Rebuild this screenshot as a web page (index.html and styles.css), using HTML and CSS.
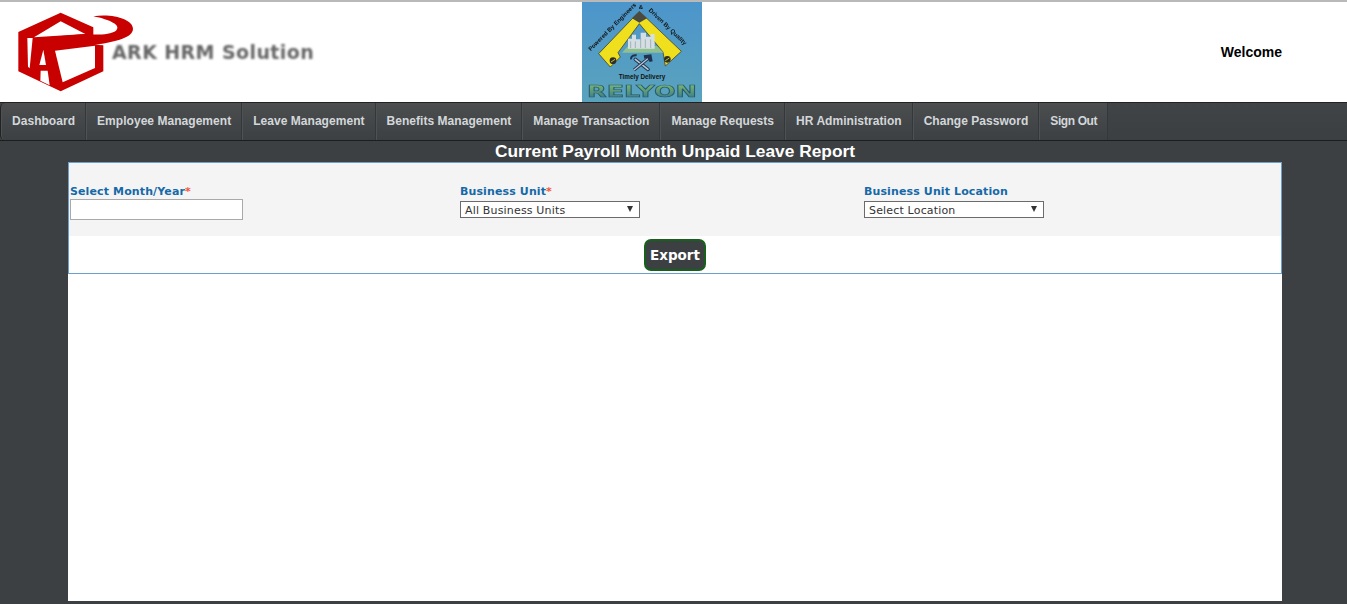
FILE: index.html
```html
<!DOCTYPE html>
<html lang="en">
<head>
<meta charset="utf-8">
<title>Current Payroll Month Unpaid Leave Report</title>
<link rel="stylesheet" href="styles.css">
</head>
<body>
<header class="top">
  <div class="brand">
    <svg class="brand-mark" width="130" height="90" viewBox="0 0 390 270" aria-hidden="true">
      <path fill="#c80000" d="M25 72 L152 14 L250 58 L250 110 L280 112 L280 190 L152 250 L25 190 Z"/>
      <path fill="#fff" d="M152 40 L226 78 L72 88 Z"/>
      <path fill="#fff" d="M52 90 L68 90 L59 181 L54 176 Z"/>
      <path fill="#fff" d="M100 125 L108 171 L88 171 Z"/>
      <path fill="#fff" d="M92 188 L113 188 L119 232 L91 218 Z"/>
      <path fill="#fff" d="M135 128 L255 113 L255 180 L158 223 Z"/>
      <path fill="#c80000" d="M250 25 C310 16 369 35 369 62 C369 88 320 100 260 110 L130 126 L96 124 L110 88 L225 78 C250 80 300 82 318 68 C335 52 300 35 250 25 Z"/>
    </svg>
    <span class="brand-name">ARK HRM Solution</span>
  </div>
  <svg class="relyon" width="120" height="100" viewBox="0 0 360 300" role="img" aria-label="Relyon">
    <defs>
      <linearGradient id="relyonBg" x1="0" y1="0" x2="0" y2="1">
        <stop offset="0" stop-color="#4c95cb"/>
        <stop offset="1" stop-color="#5aa3bd"/>
      </linearGradient>
      <linearGradient id="relyonName" x1="0" y1="0" x2="0" y2="1">
        <stop offset="0" stop-color="#7fbf6a"/>
        <stop offset="1" stop-color="#2f6f8f"/>
      </linearGradient>
    </defs>
    <rect width="360" height="300" fill="url(#relyonBg)"/>
    <path fill="#f0df1c" stroke="#2b2b20" stroke-width="2" d="M172 28 L298 148 L250 192 L243 150 L172 65 L108 152 L115 165 L85 195 L50 155 Z"/>
    <path fill="#4a4a42" d="M150 49 L172 28 L195 49 L172 62 Z"/>
    <path fill="#8fc08f" d="M138 132 L225 132 L245 152 L120 152 Z"/>
    <path fill="#d5dfe3" d="M138 140 V110 H150 V98 H162 V112 H176 V92 H192 V104 H206 V96 H218 V140 Z"/>
    <path fill="none" stroke="#8a9aa3" stroke-width="2" d="M146 118 V138 M160 118 V138 M176 110 V138 M190 112 V138 M206 112 V138"/>
    <path fill="none" stroke="#1f3350" stroke-width="11" stroke-linecap="round" d="M160 172 L198 202"/>
    <path fill="none" stroke="#b9c7d2" stroke-width="5" stroke-linecap="round" d="M160 172 L198 202"/>
    <path fill="none" stroke="#1f3350" stroke-width="9" d="M200 168 L156 204"/>
    <path fill="none" stroke="#b9c7d2" stroke-width="4" d="M200 168 L156 204"/>
    <path fill="#1f3350" d="M185 160 L208 157 L212 178 L203 180 L196 168 L187 170 Z"/>
    <path fill="none" stroke="#1f3350" stroke-width="6" d="M147 172 C146 162 156 158 164 160"/>
    <circle cx="93" cy="176" r="10" fill="#2f2f2a"/>
    <circle cx="256" cy="172" r="10" fill="#2f2f2a"/>
    <path stroke="#f0df1c" stroke-width="2.5" d="M87 180 L99 172 M250 176 L262 168"/>
    <text class="rel-tag" x="180" y="232" text-anchor="middle">Timely Delivery</text>
    <text class="rel-arc" transform="translate(26 148) rotate(-45)">Powered By Engineers</text>
    <text class="rel-arc" x="170" y="22">&amp;</text>
    <text class="rel-arc" transform="translate(199 26) rotate(44)">Driven By Quality</text>
    <text class="rel-name" x="180" y="285" text-anchor="middle" textLength="330" lengthAdjust="spacingAndGlyphs">RELYON</text>
  </svg>
  <div class="welcome">Welcome</div>
</header>

<nav class="nav">
  <a class="nav-item">Dashboard</a>
  <a class="nav-item">Employee Management</a>
  <a class="nav-item">Leave Management</a>
  <a class="nav-item">Benefits Management</a>
  <a class="nav-item">Manage Transaction</a>
  <a class="nav-item">Manage Requests</a>
  <a class="nav-item">HR Administration</a>
  <a class="nav-item">Change Password</a>
  <a class="nav-item nav-item-last">Sign Out</a>
</nav>

<main class="content">
  <h1 class="title">Current Payroll Month Unpaid Leave Report</h1>
  <section class="panel">
    <div class="filters">
      <div class="field field-month">
        <label class="label">Select Month/Year<span class="req">*</span></label>
        <input class="text-input" type="text">
      </div>
      <div class="field field-unit">
        <label class="label">Business Unit<span class="req">*</span></label>
        <div class="select"><span>All Business Units</span><i class="arrow"></i></div>
      </div>
      <div class="field">
        <label class="label">Business Unit Location</label>
        <div class="select"><span>Select Location</span><i class="arrow"></i></div>
      </div>
    </div>
    <div class="actions"><button class="export" type="button">Export</button></div>
  </section>
  <div class="results"></div>
</main>
</body>
</html>
```

FILE: styles.css
```css
* { box-sizing: border-box; }
html, body { margin: 0; padding: 0; }
body {
  height: 604px;
  overflow: hidden;
  background: #3c4043;
  font-family: "Liberation Sans", Arial, sans-serif;
}
.top {
  height: 102px;
  background: #fff;
  border-top: 2px solid #b9b9b9;
  display: grid;
  grid-template-columns: 582px 120px 1fr;
}
.brand {
  position: relative;
  padding: 6px 0 0 10px;
}
.brand-mark {
  display: block;
  filter: blur(0.4px);
}
.brand-name {
  position: absolute;
  left: 112px;
  top: 39px;
  font-family: "DejaVu Sans", Verdana, sans-serif;
  font-size: 19px;
  font-weight: bold;
  letter-spacing: 0.4px;
  color: #666;
  white-space: nowrap;
  filter: blur(0.9px);
}
.relyon {
  display: block;
  filter: blur(0.25px);
}
.rel-tag { font: bold 19px "Liberation Sans", sans-serif; fill: #111; }
.rel-arc { font: bold 18px "Liberation Sans", sans-serif; fill: #111; }
.rel-name {
  font: bold 46px "DejaVu Sans", sans-serif;
  fill: url(#relyonName);
  stroke: #2a5a70;
  stroke-width: 2;
}
.welcome {
  justify-self: end;
  padding: 42px 65px 0 0;
  font-size: 14px;
  font-weight: bold;
  color: #000;
}
.nav {
  height: 39px;
  display: flex;
  background: linear-gradient(#414446, #3b3f42);
  border-top: 1px solid #222;
  border-bottom: 1px solid #1b1d1e;
}
.nav-item {
  display: flex;
  align-items: center;
  padding: 0 10px 2px 11px;
  font-size: 12px;
  font-weight: bold;
  letter-spacing: 0.04px;
  color: #d3d7da;
  background: linear-gradient(#4c4e4f, #3c4043);
  border-right: 1px solid #35383a;
  box-shadow: inset 1px 0 0 #4f5254;
  white-space: nowrap;
}
.nav-item:first-child {
  border-left: 1px solid #222;
  border-radius: 5px 0 0 5px;
}
.nav-item-last {
  letter-spacing: -0.4px;
}
.content {
  width: 1214px;
  margin: 0 auto 0 68px;
}
.title {
  margin: 0;
  height: 21px;
  font-size: 17.33px;
  line-height: 21px;
  font-weight: bold;
  text-align: center;
  color: #fff;
}
.panel {
  height: 112px;
  background: #fff;
  border: 1px solid #6a9fce;
}
.filters {
  height: 73px;
  background: #f4f4f4;
  display: flex;
  padding: 21px 0 0 1px;
}
.field { display: flex; flex-direction: column; }
.field-month { width: 390px; }
.field-unit { width: 404px; }
.label {
  height: 15px;
  font: bold 11px/15px "DejaVu Sans", Verdana, sans-serif;
  letter-spacing: 0.12px;
  color: #1569a8;
  white-space: nowrap;
}
.req { color: #f4553f; }
.text-input {
  width: 173px;
  height: 21px;
  margin: 0;
  padding: 0;
  background: #fff;
  border: 1px solid #a9a9a9;
}
.select {
  width: 180px;
  height: 17px;
  margin-top: 2px;
  padding: 1px 6px 0 4px;
  display: flex;
  align-items: center;
  justify-content: space-between;
  background: #fff;
  border: 1px solid #6b6b6b;
  font: 11px "DejaVu Sans", Verdana, sans-serif;
  letter-spacing: 0.17px;
  color: #333;
}
.arrow {
  width: 0;
  height: 0;
  margin-bottom: 2px;
  border-left: 3.5px solid transparent;
  border-right: 3.5px solid transparent;
  border-top: 6px solid #333;
}
.actions {
  height: 37px;
  display: flex;
  justify-content: center;
  padding-top: 3px;
}
.export {
  width: 62px;
  height: 32px;
  padding: 0;
  background: #3c4043;
  border: 2px solid #17601c;
  border-radius: 7px;
  color: #fff;
  font: bold 13.5px "DejaVu Sans", Verdana, sans-serif;
}
.results {
  height: 327px;
  background: #fff;
}
```
